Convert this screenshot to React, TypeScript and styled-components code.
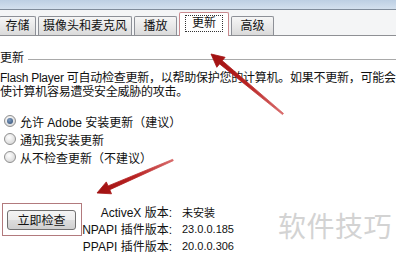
import React from "react";
import styled, { createGlobalStyle } from "styled-components";

const Global = createGlobalStyle`
  html, body { margin: 0; padding: 0; background: #fff; }
  body { font-family: "Liberation Sans", "Noto Sans CJK SC", sans-serif; }
`;

const Page = styled.div`
  position: relative;
  width: 396px;
  height: 259px;
  overflow: hidden;
  background: #fff;
  color: #111;
  font-family: "Liberation Sans", "Noto Sans CJK SC", sans-serif;
  font-size: 12px;
`;

const TitleStrip = styled.div`
  height: 9px;
  background: linear-gradient(#bccfe3, #d3e0ee);
`;

const TabStrip = styled.div`
  height: 27px;
  display: flex;
  align-items: flex-end;
  gap: 2px;
  background: #f4f5f6;
  border-top: 1px solid #7f8c9b;
  border-bottom: 1px solid #8e9094;
  box-sizing: border-box;
  margin-left: -1px;
`;

const Tab = styled.div<{ $w: number; $active?: boolean }>`
  box-sizing: border-box;
  width: ${(p) => p.$w}px;
  height: ${(p) => (p.$active ? 24 : 19)}px;
  margin-bottom: ${(p) => (p.$active ? -1 : 0)}px;
  border: 1px solid ${(p) => (p.$active ? "#c98a8f" : "#8d9097")};
  border-bottom: none;
  border-radius: 2px 2px 0 0;
  background: ${(p) =>
    p.$active ? "#fff" : "linear-gradient(#f6f6f6, #e6e6e6 60%, #dadada)"};
  display: flex;
  align-items: ${(p) => (p.$active ? "flex-start" : "center")};
  justify-content: center;
  padding-top: ${(p) => (p.$active ? 2 : 0)}px;
  font-size: 12px;
  line-height: 16px;
  color: #111;
`;

const FocusLabel = styled.span`
  border: 1px dotted #333;
  padding: 0 6px;
  line-height: 15px;
`;

const Content = styled.div`
  display: flex;
  flex-direction: column;
`;

const GroupHeader = styled.div`
  margin-top: 14px;
  height: 16px;
  display: flex;
  align-items: center;
  gap: 4px;
  line-height: 16px;
`;

const Rule = styled.div`
  flex: 1;
  height: 1px;
  background: #a9a9a9;
  margin-top: 2px;
`;

const Paragraph = styled.div`
  margin-top: 5px;
  line-height: 14px;
  white-space: nowrap;
  letter-spacing: -0.25px;
`;

const RadioList = styled.div`
  margin-top: 13px;
  display: flex;
  flex-direction: column;
`;

const RadioRow = styled.div`
  height: 18px;
  display: flex;
  align-items: center;
  gap: 4px;
  padding-left: 4px;
`;

const RadioDot = styled.span<{ $checked?: boolean }>`
  box-sizing: border-box;
  width: 12px;
  height: 12px;
  border-radius: 50%;
  border: 1px solid #8f8f8f;
  background: radial-gradient(circle at 40% 35%, #ffffff, #dcdcdc 70%, #c8c8c8);
  display: flex;
  align-items: center;
  justify-content: center;
  &::after {
    content: "";
    display: ${(p) => (p.$checked ? "block" : "none")};
    width: 6px;
    height: 6px;
    border-radius: 50%;
    background: radial-gradient(circle at 40% 35%, #7f9cc0, #2d4a70);
  }
`;

const BottomRow = styled.div`
  margin-top: 37px;
  display: flex;
  align-items: flex-start;
`;

const ButtonFrame = styled.div`
  box-sizing: border-box;
  margin-left: 2px;
  width: 80px;
  height: 33px;
  border: 1px solid #b27a7d;
  display: flex;
  align-items: center;
  padding-left: 4px;
`;

const Button = styled.div`
  box-sizing: border-box;
  width: 69px;
  height: 20px;
  border: 1px solid #707070;
  border-radius: 3px;
  background: linear-gradient(#f4f4f4, #ebebeb 50%, #dddddd 51%, #cfcfcf);
  display: flex;
  align-items: center;
  justify-content: center;
  font-size: 12px;
  color: #111;
`;

const InfoGrid = styled.div`
  display: grid;
  grid-template-columns: 90px auto;
  column-gap: 10px;
  grid-auto-rows: 17px;
  align-items: center;
`;

const InfoLabel = styled.div`
  text-align: right;
  white-space: nowrap;
  font-size: 12px;
`;

const InfoValue = styled.div`
  white-space: nowrap;
  font-size: 11px;
`;

const Watermark = styled.div`
  position: absolute;
  left: 278px;
  top: 206px;
  font-family: "Noto Sans CJK SC", sans-serif;
  font-size: 28px;
  line-height: 38px;
  color: #d3d3d3;
  letter-spacing: 0.5px;
`;

const Overlay = styled.svg`
  position: absolute;
  left: 0;
  top: 0;
  pointer-events: none;
`;

type ArrowProps = { tip: [number, number]; tail: [number, number]; id: string };

function Arrow({ tip, tail, id }: ArrowProps) {
  const dx = tip[0] - tail[0];
  const dy = tip[1] - tail[1];
  const len = Math.hypot(dx, dy);
  const ux = dx / len;
  const uy = dy / len;
  const nx = -uy;
  const ny = ux;
  const headLen = 13;
  const headW = 6.5;
  const bx = tip[0] - ux * headLen;
  const by = tip[1] - uy * headLen;
  const sw = 2.1;
  const tw = 0.8;
  const pts = [
    [tip[0], tip[1]],
    [bx + nx * headW, by + ny * headW],
    [bx + nx * sw, by + ny * sw],
    [tail[0] + nx * tw, tail[1] + ny * tw],
    [tail[0] - nx * tw, tail[1] - ny * tw],
    [bx - nx * sw, by - ny * sw],
    [bx - nx * headW, by - ny * headW],
  ]
    .map((p) => `${p[0].toFixed(1)},${p[1].toFixed(1)}`)
    .join(" ");
  return (
    <g>
      <defs>
        <linearGradient id={id} gradientUnits="userSpaceOnUse" x1={tail[0]} y1={tail[1]} x2={tip[0]} y2={tip[1]}>
          <stop offset="0" stopColor="#d86a6a" />
          <stop offset="0.5" stopColor="#b82222" />
          <stop offset="1" stopColor="#a01010" />
        </linearGradient>
      </defs>
      <polygon points={pts} fill={`url(#${id})`} stroke={`url(#${id})`} strokeWidth={0.8} strokeLinejoin="round" />
    </g>
  );
}

export default function App() {
  return (
    <>
      <Global />
      <Page>
        <TitleStrip />
        <TabStrip>
          <Tab $w={37}>存储</Tab>
          <Tab $w={94}>摄像头和麦克风</Tab>
          <Tab $w={43}>播放</Tab>
          <Tab $w={50} $active>
            <FocusLabel>更新</FocusLabel>
          </Tab>
          <Tab $w={43}>高级</Tab>
        </TabStrip>
        <Content>
          <GroupHeader>
            <span>更新</span>
            <Rule />
          </GroupHeader>
          <Paragraph>
            Flash Player 可自动检查更新，以帮助保护您的计算机。如果不更新，可能会
            <br />
            使计算机容易遭受安全威胁的攻击。
          </Paragraph>
          <RadioList>
            <RadioRow>
              <RadioDot $checked />
              <span>允许 Adobe 安装更新（建议）</span>
            </RadioRow>
            <RadioRow>
              <RadioDot />
              <span>通知我安装更新</span>
            </RadioRow>
            <RadioRow>
              <RadioDot />
              <span>从不检查更新（不建议）</span>
            </RadioRow>
          </RadioList>
          <BottomRow>
            <ButtonFrame>
              <Button>立即检查</Button>
            </ButtonFrame>
            <InfoGrid>
              <InfoLabel>ActiveX 版本:</InfoLabel>
              <InfoValue>未安装</InfoValue>
              <InfoLabel>NPAPI 插件版本:</InfoLabel>
              <InfoValue>23.0.0.185</InfoValue>
              <InfoLabel>PPAPI 插件版本:</InfoLabel>
              <InfoValue>20.0.0.306</InfoValue>
            </InfoGrid>
          </BottomRow>
        </Content>
        <Watermark>软件技巧</Watermark>
        <Overlay width={396} height={259} viewBox="0 0 396 259">
          <Arrow id="a1" tip={[211, 54]} tail={[283, 114]} />
          <Arrow id="a2" tip={[97, 193]} tail={[173, 160]} />
        </Overlay>
      </Page>
    </>
  );
}
